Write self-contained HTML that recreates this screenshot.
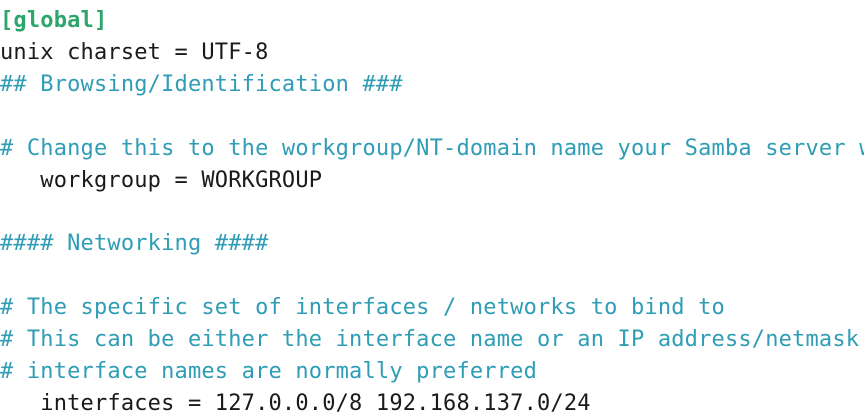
<!DOCTYPE html>
<html><head><style>
body{margin:0;width:864px;height:418px;background:#fff;overflow:hidden;position:relative}
pre{margin:0;position:absolute;left:0;top:5px;width:864px;height:413px;overflow:hidden;font-family:"DejaVu Sans Mono","Liberation Mono",monospace;font-size:22px;letter-spacing:0.18px;line-height:31.9px;color:#1a1a1a;white-space:pre}
.g{color:#2ea56a;font-weight:bold}
.c{color:#2f9db5}
</style></head><body>
<pre><span class="g">[global]</span>
unix charset = UTF-8
<span class="c">## Browsing/Identification ###</span>

<span class="c"># Change this to the workgroup/NT-domain name your Samba server w</span>
   workgroup = WORKGROUP

<span class="c">#### Networking ####</span>

<span class="c"># The specific set of interfaces / networks to bind to</span>
<span class="c"># This can be either the interface name or an IP address/netmask</span>
<span class="c"># interface names are normally preferred</span>
   interfaces = 127.0.0.0/8 192.168.137.0/24</pre>
</body></html>
